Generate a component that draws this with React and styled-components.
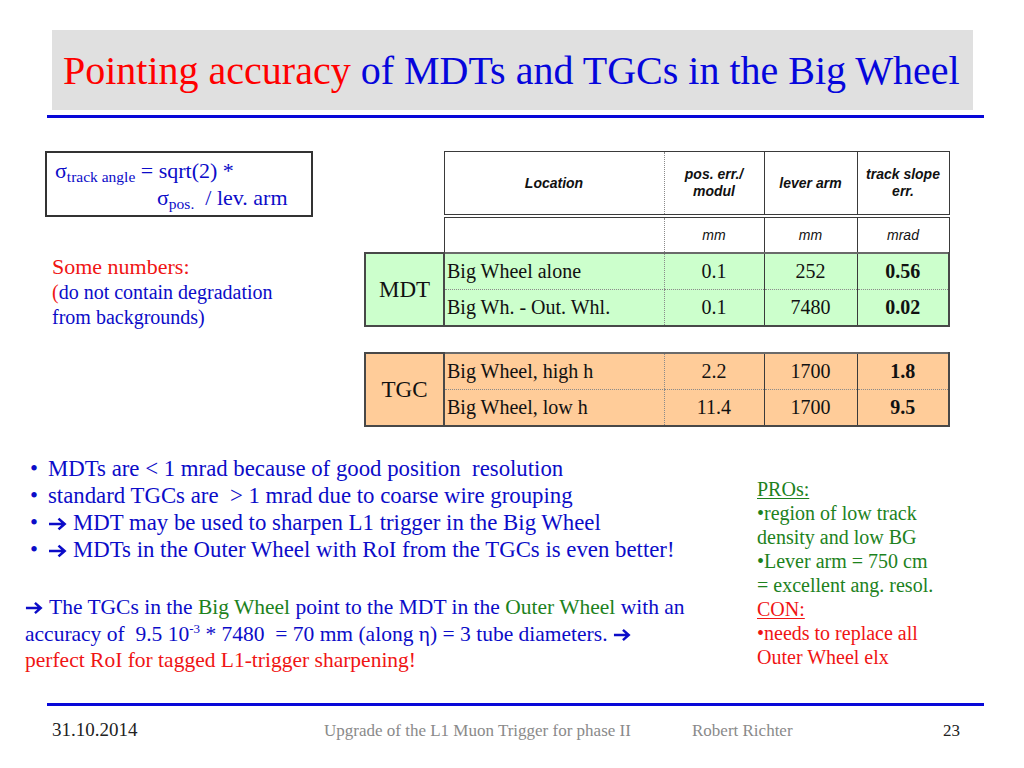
import React from 'react';
import styled, { createGlobalStyle } from 'styled-components';

const GlobalStyle = createGlobalStyle`
  html, body {
    margin: 0;
    padding: 0;
    background: #ffffff;
  }
  body {
    font-family: "Liberation Serif", "Times New Roman", serif;
  }
`

const BLUE = '#0c0cc8';
const RED = '#f01414';
const GREEN = '#1d821d';

const Slide = styled.div`
  width: 1024px;
  height: 768px;
  display: flex;
  flex-direction: column;
  background: #ffffff;
  font-family: "Liberation Serif", "Times New Roman", serif;
  overflow: hidden;
`

const TitleBox = styled.div`
  margin: 30px 51px 0 52px;
  height: 80px;
  padding-left: 11px;
  display: flex;
  align-items: center;
  background: #e0e0e0;
  font-size: 40px;
  color: #0606dc;
  white-space: nowrap;
`

const Tone = styled.span`
  color: ${p => p.$color};
`

const Rule = styled.div`
  margin: ${p => p.$top}px 40px 0 47px;
  height: 3px;
  background: #0808d8;
`

const Middle = styled.div`
  display: flex;
  margin-top: 33px;
`

const LeftCol = styled.div`
  flex: 0 0 364px;
  box-sizing: border-box;
  padding-left: 45px;
`

const FormulaBox = styled.div`
  width: 268px;
  height: 66px;
  box-sizing: border-box;
  border: 2px solid #333333;
  padding: 4px 0 0 8px;
  font-size: 22px;
  line-height: 27px;
  color: ${BLUE};
`

const FormulaLine = styled.div`
  padding-left: ${p => p.$indent || 0}px;
  white-space: nowrap;
`

const Sub = styled.sub`
  font-size: 15.5px;
  line-height: 0;
  vertical-align: -4px;
`

const Notes = styled.div`
  margin-top: 36px;
  padding-left: 7px;
  color: ${BLUE};
`

const NotesHead = styled.div`
  font-size: 22px;
  line-height: 27px;
  color: ${RED};
`

const NotesBody = styled.div`
  font-size: 20px;
  line-height: 25px;
  white-space: nowrap;
`

const TableCol = styled.div`
  flex: 0 0 586px;
`

const DataTable = styled.table`
  border-collapse: collapse;
  table-layout: fixed;
  width: 586px;
  margin-top: ${p => p.$top || 0}px;
  color: #111111;
  font-family: "Liberation Serif", "Times New Roman", serif;
`

const Corner = styled.td`
  border: none;
  padding: 0;
`

const HeadCell = styled.th`
  height: ${p => p.$units ? 34 : 62}px;
  padding: 0 2px;
  font-family: "Liberation Sans", Arial, sans-serif;
  font-style: italic;
  font-weight: ${p => p.$units ? 400 : 700};
  font-size: 14px;
  line-height: 17px;
  text-align: center;
  vertical-align: middle;
  border-left: 1px ${p => p.$dot ? 'dotted #8a8a8a' : 'solid #3a3a3a'};
  border-right: ${p => p.$end ? '1px solid #3a3a3a' : 'none'};
  border-top: ${p => p.$units ? 'none' : '1px solid #3a3a3a'};
  border-bottom: ${p => p.$units ? 'none' : '4px double #3a3a3a'};
`

const Row = styled.tr`
  background: ${p => p.$bg};
`

const GroupCell = styled.td`
  padding: 0;
  font-size: 23px;
  text-align: center;
  vertical-align: middle;
  border: 2px solid #484848;
`

const Cell = styled.td`
  height: 35px;
  padding: 0 0 0 ${p => p.$left ? 2 : 0}px;
  font-size: 20px;
  text-align: ${p => p.$left ? 'left' : 'center'};
  font-weight: ${p => p.$bold ? 700 : 400};
  white-space: nowrap;
  border-left: 1px ${p => p.$dot ? 'dotted #8a8a8a' : 'solid #3a3a3a'};
  border-right: ${p => p.$end ? '2px solid #484848' : 'none'};
  border-top: ${p => p.$first ? '2px solid #6a6a6a' : 'none'};
  border-bottom: ${p => p.$first ? '1px dotted #8a8a8a' : '2px solid #484848'};
`

const Lower = styled.div`
  display: grid;
  grid-template-columns: 757px 1fr;
  margin-top: 28px;
`

const TextCol = styled.div`
  padding-left: 25px;
`

const BulletList = styled.ul`
  margin: 0;
  padding: 0 0 0 5px;
  list-style: none;
  font-size: 22.8px;
  color: ${BLUE};
`

const Bullet = styled.li`
  height: 27px;
  line-height: 27px;
  white-space: nowrap;
`

const Dot = styled.span`
  display: inline-block;
  width: 18px;
`

const ArrowMark = styled.svg`
  width: ${p => p.$w}px;
  height: 14px;
  margin-right: 6px;
  vertical-align: -1px;
`

const Paragraph = styled.div`
  margin-top: 31px;
  font-size: 21.5px;
  color: ${BLUE};
  white-space: nowrap;
`

const ParaLine = styled.div`
  height: 26.5px;
  line-height: 26.5px;
  color: ${p => p.$color || BLUE};
`

const Sup = styled.sup`
  font-size: 13px;
  line-height: 0;
  vertical-align: 8px;
`

const Pros = styled.div`
  margin-top: 22px;
  font-size: 20px;
  line-height: 24px;
  color: ${GREEN};
  white-space: nowrap;
`

const ProsHead = styled.div`
  text-decoration: underline;
  text-underline-offset: 2px;
  text-decoration-thickness: 1px;
  color: ${p => p.$color};
`

const ProsLine = styled.div`
  color: ${p => p.$color || GREEN};
`

const Footer = styled.div`
  margin-top: auto;
  padding-bottom: 27px;
`

const FooterRow = styled.div`
  display: grid;
  grid-template-columns: 272px 368px 1fr auto;
  align-items: baseline;
  margin-top: 14px;
  padding: 0 64px 0 52px;
  font-size: 17px;
  line-height: 20px;
  color: #8a8a8a;
  white-space: nowrap;
`

const FooterDark = styled.span`
  color: #222222;
  font-size: ${p => p.$size || 17}px;
`

function ArrowGlyph ({ width = 19 }) {
  return (
    <ArrowMark $w={width} viewBox='0 0 19 14'>
      <path d='M1 7 H16.5 M10.5 1.6 L16.6 7 L10.5 12.4' fill='none' stroke={BLUE} strokeWidth='2.6' strokeLinejoin='miter' />
    </ArrowMark>
  )
}

function Columns () {
  return (
    <colgroup>
      <col style={{ width: 79 }} />
      <col style={{ width: 220 }} />
      <col style={{ width: 100 }} />
      <col style={{ width: 93 }} />
      <col style={{ width: 92 }} />
    </colgroup>
  )
}

export default function App () {
  return (
    <Slide>
      <GlobalStyle />
      <TitleBox>
        <Tone $color='#ff0000'>Pointing accuracy</Tone>&nbsp;of MDTs and TGCs in the Big Wheel
      </TitleBox>
      <Rule $top={5} />

      <Middle>
        <LeftCol>
          <FormulaBox>
            <FormulaLine>σ<Sub>track angle</Sub> = sqrt(2) *</FormulaLine>
            <FormulaLine $indent={102}>σ<Sub>pos.</Sub> &nbsp;/ lev. arm</FormulaLine>
          </FormulaBox>
          <Notes>
            <NotesHead>Some numbers:</NotesHead>
            <NotesBody>
              <Tone $color={RED}>(</Tone>do not contain degradation<br />
              from backgrounds)
            </NotesBody>
          </Notes>
        </LeftCol>

        <TableCol>
          <DataTable>
            <Columns />
            <tbody>
              <tr>
                <Corner rowSpan={2} />
                <HeadCell>Location</HeadCell>
                <HeadCell $dot>pos. err./<br />modul</HeadCell>
                <HeadCell>lever arm</HeadCell>
                <HeadCell $end>track slope<br />err.</HeadCell>
              </tr>
              <tr>
                <HeadCell $units />
                <HeadCell $units $dot>mm</HeadCell>
                <HeadCell $units>mm</HeadCell>
                <HeadCell $units $end>mrad</HeadCell>
              </tr>
              <Row $bg='#ccffcc'>
                <GroupCell rowSpan={2}>MDT</GroupCell>
                <Cell $first $left>Big Wheel alone</Cell>
                <Cell $first $dot>0.1</Cell>
                <Cell $first>252</Cell>
                <Cell $first $end $bold>0.56</Cell>
              </Row>
              <Row $bg='#ccffcc'>
                <Cell $left>Big Wh. - Out. Whl.</Cell>
                <Cell $dot>0.1</Cell>
                <Cell>7480</Cell>
                <Cell $end $bold>0.02</Cell>
              </Row>
            </tbody>
          </DataTable>

          <DataTable $top={25}>
            <Columns />
            <tbody>
              <Row $bg='#ffcc99'>
                <GroupCell rowSpan={2}>TGC</GroupCell>
                <Cell $first $left>Big Wheel, high h</Cell>
                <Cell $first $dot>2.2</Cell>
                <Cell $first>1700</Cell>
                <Cell $first $end $bold>1.8</Cell>
              </Row>
              <Row $bg='#ffcc99'>
                <Cell $left>Big Wheel, low h</Cell>
                <Cell $dot>11.4</Cell>
                <Cell>1700</Cell>
                <Cell $end $bold>9.5</Cell>
              </Row>
            </tbody>
          </DataTable>
        </TableCol>
      </Middle>

      <Lower>
        <TextCol>
          <BulletList>
            <Bullet><Dot>•</Dot>MDTs are &lt; 1 mrad because of good position&nbsp; resolution</Bullet>
            <Bullet><Dot>•</Dot>standard TGCs are &nbsp;&gt; 1 mrad due to coarse wire grouping</Bullet>
            <Bullet><Dot>•</Dot><ArrowGlyph />MDT may be used to sharpen L1 trigger in the Big Wheel</Bullet>
            <Bullet><Dot>•</Dot><ArrowGlyph />MDTs in the Outer Wheel with RoI from the TGCs is even better!</Bullet>
          </BulletList>
          <Paragraph>
            <ParaLine>
              <ArrowGlyph width={18} />The TGCs in the <Tone $color={GREEN}>Big Wheel</Tone> point to the MDT in the <Tone $color={GREEN}>Outer Wheel</Tone> with an
            </ParaLine>
            <ParaLine>
              accuracy of &nbsp;9.5 10<Sup>-3</Sup> * 7480 &nbsp;= 70 mm (along η) = 3 tube diameters. <ArrowGlyph width={18} />
            </ParaLine>
            <ParaLine $color={RED}>perfect RoI for tagged L1-trigger sharpening!</ParaLine>
          </Paragraph>
        </TextCol>
        <Pros>
          <ProsHead $color={GREEN}>PROs:</ProsHead>
          <ProsLine>•region of low track</ProsLine>
          <ProsLine>density and low BG</ProsLine>
          <ProsLine>•Lever arm = 750 cm</ProsLine>
          <ProsLine>= excellent ang. resol.</ProsLine>
          <ProsHead $color={RED}>CON:</ProsHead>
          <ProsLine $color={RED}>•needs to replace all</ProsLine>
          <ProsLine $color={RED}>Outer Wheel elx</ProsLine>
        </Pros>
      </Lower>

      <Footer>
        <Rule $top={0} />
        <FooterRow>
          <FooterDark $size={19}>31.10.2014</FooterDark>
          <span>Upgrade of the L1 Muon Trigger for phase II</span>
          <span>Robert Richter</span>
          <FooterDark>23</FooterDark>
        </FooterRow>
      </Footer>
    </Slide>
  )
}
